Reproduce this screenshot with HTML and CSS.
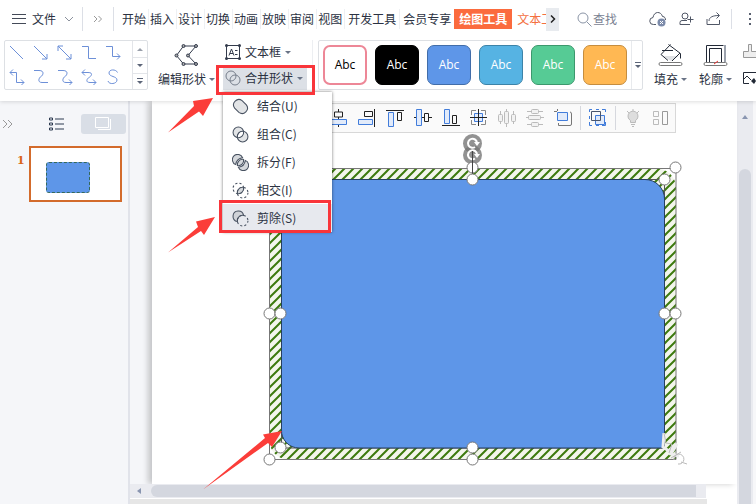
FILE: index.html
```html
<!DOCTYPE html>
<html lang="zh-CN">
<head>
<meta charset="utf-8">
<title>演示编辑器</title>
<link rel="stylesheet" href="styles.css">
</head>
<body>
<header class="header">
  <nav class="menubar">
    <button class="file-btn">
      <svg width="14" height="12" viewBox="0 0 14 12"><path d="M0 1.500h14M0 5.500h14M0 10.500h14" stroke="#444a58"/></svg>
      <span>文件</span>
      <svg width="10" height="6" viewBox="0 0 10 6"><path d="M1 1l4 4 4-4" stroke="#8b919d"/></svg>
    </button>
    <button class="more-btn" aria-label="更多"><svg width="10" height="8" viewBox="0 0 10 8"><path d="M1 1l3 3-3 3M5.500 1l3 3-3 3" stroke="#999"/></svg></button>
    <div class="tabs">
      <a href="#">开始</a><a href="#">插入</a><a href="#">设计</a><a href="#">切换</a><a href="#">动画</a><a href="#">放映</a><a href="#">审阅</a><a href="#">视图</a><a href="#" class="wide">开发工具</a><a href="#" class="wide">会员专享</a><a href="#" class="active">绘图工具</a><a href="#" class="clipped">文本工具</a>
    </div>
    <button class="tab-next" aria-label="下一组"><svg width="6" height="8" viewBox="0 0 6 8"><path d="M1 0.500L4.500 4 1 7.500" stroke="#222" stroke-width="1.500"/></svg></button>
    <button class="search"><svg width="15" height="15" viewBox="0 0 15 15"><circle cx="6" cy="6" r="5" stroke="#8a94a6"/><path d="M10 10l4.500 4.500" stroke="#8a94a6"/></svg>查找</button>
    <div class="tools">
      <button aria-label="云同步"><svg width="18" height="16" viewBox="0 0 18 16"><path d="M7 13.500H4.500A3.500 3.500 0 0 1 4 6.500C5 0 12 0 13.500 5.500c2.500 0 3 2 3 3.500" stroke="#505766"/><circle cx="12.500" cy="11.500" r="4" fill="#7c8baa"/><path d="M11 10l3 3m0-3l-3 3" stroke="#fff"/></svg></button>
      <button aria-label="协作"><svg width="15" height="14" viewBox="0 0 15 14"><circle cx="6" cy="4" r="3" stroke="#505766"/><path d="M11 12.500H1v-2Q1 8.500 3 8.500h5M11.500 4.500v6M8.500 7.500h6" stroke="#505766"/></svg></button>
      <button aria-label="分享"><svg width="15" height="14" viewBox="0 0 15 14"><path d="M1 7v5.500h12.500V8M3 9c0-4 4-5.500 10-5.500M10.500.5l3 3-3 3" stroke="#505766"/></svg></button>
    </div>
    <button class="dots" aria-label="选项"><i></i><i></i><i></i></button>
  </nav>

  <div class="ribbon">
    <div class="shapes">
      <div class="shape-grid">
        <button aria-label="直线"><svg viewBox="0 0 16 16"><path d="M1 1l13 13"/></svg></button>
        <button aria-label="箭头"><svg viewBox="0 0 16 16"><path d="M1 1l13 13M14 9v5H9"/></svg></button>
        <button aria-label="双向箭头"><svg viewBox="0 0 16 16"><path d="M1 1l13 13M14 9v5H9M1 6V1h5"/></svg></button>
        <button aria-label="肘形"><svg viewBox="0 0 16 16"><path d="M1 1.500h6.500v12H15"/></svg></button>
        <button aria-label="肘形箭头"><svg viewBox="0 0 16 16"><path d="M1 1.500h6.500v10H15M12 8.500l3 3-3 3"/></svg></button>
        <button aria-label="双向肘形"><svg viewBox="0 0 16 16"><path d="M1 3.500h6.500v10H15M12 10.500l3 3-3 3M4 .5l-3 3 3 3"/></svg></button>
        <button aria-label="曲线"><svg viewBox="0 0 16 16"><path d="M1 1.500h5c6 0 4 5 2 6s-4 6 1 6h6"/></svg></button>
        <button aria-label="曲线箭头"><svg viewBox="0 0 16 16"><path d="M1 1.500h5c6 0 4 5 2 6s-4 6 1 6h6M12 10.500l3 3-3 3"/></svg></button>
        <button aria-label="双向曲线"><svg viewBox="0 0 16 16"><path d="M1 3.500h6c6 0 3 4 1 5s-4 5 1 5h6M12 10.500l3 3-3 3M4 .5l-3 3 3 3"/></svg></button>
        <button aria-label="自由曲线"><svg viewBox="0 0 16 16"><path d="M12.500 3.500C11 0 4 0 4 4s8 3 8 7-8 5-9 1"/></svg></button>
      </div>
      <div class="stepper">
        <button aria-label="上"><svg width="6" height="3" viewBox="0 0 6 3"><path d="M0 3l3-3 3 3z" fill="#999faa"/></svg></button>
        <button aria-label="下"><svg width="6" height="3" viewBox="0 0 6 3"><path d="M0 0l3 3 3-3z" fill="#5c6578"/></svg></button>
        <button aria-label="展开"><svg width="6" height="7" viewBox="0 0 6 7"><path d="M0 .5h6" stroke="#5c6578"/><path d="M0 3l3 3 3-3z" fill="#5c6578"/></svg></button>
      </div>
    </div>

    <button class="big edit-shape">
      <svg width="25" height="24" viewBox="0 0 25 24"><path d="M9.500 3H22l-8 9.500L22 21H9.500L2.500 12.500z" stroke="#333b4c"/><g fill="#aaa" stroke="#333b4c"><circle cx="9.500" cy="3" r="1.500"/><circle cx="22" cy="3" r="1.500"/><circle cx="14" cy="12.500" r="1.500"/><circle cx="22" cy="21" r="1.500"/><circle cx="9.500" cy="21" r="1.500"/><circle cx="2.500" cy="12.500" r="1.500"/></g></svg>
      <span class="label">编辑形状<i class="caret"></i></span>
    </button>

    <div class="stack">
      <button class="small"><svg width="16" height="16" viewBox="0 0 16 16"><path d="M1.500 1.500h13v13h-13z" stroke="#333b4c"/><g fill="#333b4c"><circle cx="1.500" cy="1.500" r="1.500"/><circle cx="14.500" cy="1.500" r="1.500"/><circle cx="1.500" cy="14.500" r="1.500"/><circle cx="14.500" cy="14.500" r="1.500"/></g><path d="M4 11.500L6.500 5 9 11.500M5 9.500h3M10 6.500h2.500M10 10.500h2.500" stroke="#333b4c"/></svg><span>文本框</span><i class="caret"></i></button>
      <div class="merge">
        <button class="small open"><svg width="16" height="16" viewBox="0 0 16 16"><circle cx="6" cy="6" r="5" stroke="#777f8c"/><circle cx="10" cy="10" r="5" stroke="#777f8c"/></svg><span>合并形状</span><i class="caret"></i></button>
        <div class="dropdown" role="menu">
          <button role="menuitem"><svg viewBox="0 0 16 16"><path d="M2.500 9.500a5 5 0 0 1 7-7l4 4a5 5 0 0 1-7 7z" fill="#e2e4e6"/></svg>结合(U)</button>
          <button role="menuitem"><svg viewBox="0 0 16 16"><circle cx="6" cy="6" r="5" fill="#e2e4e6"/><circle cx="10" cy="10" r="5" fill="#e2e4e6"/><path d="M5.100 10.900A5 5 0 0 1 10.900 5.100 5 5 0 0 1 5.100 10.900z" fill="#fff"/></svg>组合(C)</button>
          <button role="menuitem"><svg viewBox="0 0 16 16"><path d="M3.500 10A5 5 0 1 1 10 3.500C6 4 4 6 3.500 10zM12.500 6A5 5 0 1 1 6 12.500C10 12 12 10 12.500 6z" fill="#d5d8dc"/><path d="M5.100 10.900A5 5 0 0 1 10.900 5.100 5 5 0 0 1 5.100 10.900z" fill="#d5d8dc"/></svg>拆分(F)</button>
          <button role="menuitem"><svg viewBox="0 0 16 16"><g stroke-dasharray="2 2"><circle cx="6" cy="6" r="5"/><circle cx="10" cy="10" r="5"/></g><path d="M5.100 10.900A5 5 0 0 1 10.900 5.100 5 5 0 0 1 5.100 10.900z" fill="#d5d8dc"/></svg>相交(I)</button>
          <button role="menuitem" class="selected"><svg viewBox="0 0 16 16"><path d="M5.100 10.900A5 5 0 1 1 10.900 5.100 5 5 0 0 0 5.100 10.900z" fill="#d0d3d8"/><circle cx="10" cy="10" r="5" stroke-dasharray="2 2"/></svg>剪除(S)</button>
        </div>
      </div>
    </div>

    <div class="styles">
      <button class="swatch white">Abc</button>
      <button class="swatch black">Abc</button>
      <button class="swatch blue">Abc</button>
      <button class="swatch sky">Abc</button>
      <button class="swatch green">Abc</button>
      <button class="swatch orange">Abc</button>
      <button class="expand" aria-label="更多样式"><svg width="6" height="7" viewBox="0 0 6 7"><path d="M0 .5h6" stroke="#5c6578"/><path d="M0 3l3 3 3-3z" fill="#5c6578"/></svg></button>
    </div>

    <button class="big fill">
      <svg width="25" height="24" viewBox="0 0 25 24"><path d="M5 13h16l-8 5z" fill="#dfe1e4"/><path d="M12.500 1.500L3 11.500l7 6M10.500 1.500l12 9v5M22 10l-8 8M4 7.500h11" stroke="#222936"/><rect x="1" y="19.500" width="23" height="3" rx="1.500" fill="#fff" stroke="#777"/></svg>
      <span class="label">填充<i class="caret"></i></span>
    </button>
    <button class="big outline">
      <svg width="25" height="24" viewBox="0 0 25 24"><path d="M3.500 19V2.500h17" stroke="#222936"/><path d="M6.500 19V5.500h12V19" stroke="#222936"/><path d="M22 2v17" stroke="#9ca2ad" stroke-width="2"/><rect x="1" y="19.500" width="23" height="3" rx="1.500" fill="#fff" stroke="#777"/><path d="M11 21l4-3" stroke="#e33"/></svg>
      <span class="label">轮廓<i class="caret"></i></span>
    </button>
    <div class="edge">
      <button aria-label="格式刷"><svg width="16" height="16" viewBox="0 0 16 16"><path d="M1.500 14.500v-6h5v-7h3v7h5v6z" fill="#eee" stroke="#999"/></svg></button>
      <button aria-label="图片效果"><svg width="16" height="14" viewBox="0 0 16 14"><path d="M7 12.500H1.500v-11h14v5M2 8l3-3 4 4" stroke="#222936"/><path d="M9 10l3-3 2 3-2 3z" fill="#222936"/></svg></button>
    </div>
  </div>
</header>

<main class="main">
  <aside class="side">
    <div class="side-head">
      <button aria-label="展开"><svg width="11" height="10" viewBox="0 0 11 10"><path d="M1 1l4 4-4 4M6 1l4 4-4 4" stroke="#999"/></svg></button>
      <button class="list" aria-label="大纲"><svg width="15" height="14" viewBox="0 0 15 14"><path d="M.5 1h3v2h-3zM.5 6h3v2h-3zM.5 11h3v2h-3zM6 2h9M6 7h9M6 12h9" stroke="#2d3a50"/></svg></button>
      <button class="thumbs" aria-label="幻灯片"><svg width="17" height="14" viewBox="0 0 17 14"><path d="M.5.5h13v10H.5zM3 12.500h12.500V2" stroke="#fff"/></svg></button>
    </div>
    <div class="slide-row">
      <b>1</b>
      <div class="slide"><div class="mini"></div></div>
    </div>
  </aside>

  <section class="work">
    <div class="view">
      <div class="canvas">
        <div class="page">
          <svg class="drawing" width="440" height="340" viewBox="260 130 440 340">
            <defs><pattern id="hatch" width="9" height="9" patternUnits="userSpaceOnUse"><path d="M0 0h9v9H0z" fill="#f3f6ec"/><path d="M-3 3l6-6M-1 10l11-11M6 12l6-6" stroke="#3c7a0d" stroke-width="2"/></pattern></defs>
            <path d="M269.500 168.500H657A19 19 0 0 1 676 187V459.500H288A19 19 0 0 1 269.500 441z" fill="url(#hatch)"/>
            <path d="M269.500 168.500h406.500v291h-406.500z" stroke="#777"/>
            <path d="M281.500 179.500h383v268.500h-383z" stroke="#555"/>
            <path d="M281.500 179.500H645A19.500 19.500 0 0 1 664.500 199V448H299A17.500 17.500 0 0 1 281.500 430z" fill="#5e96e8" stroke="#263f60"/>
            <g class="rotate"><circle cx="472.500" cy="143.500" r="9.500"/><circle cx="472.500" cy="155" r="9.500"/><path d="M475 147a4.500 4.500 0 1 1 2-4M475 158.500a4.500 4.500 0 1 1 2-4"/><path class="tip" d="M474 142h6l-3 4zM474 154h6l-3 4z"/></g>
            <g fill="#fff" stroke="#777"><circle cx="472.500" cy="167.500" r="5.500"/><path d="M472.500 151v23" stroke="#444"/><circle cx="472.500" cy="179.500" r="5.500"/><circle cx="675.500" cy="167.500" r="5.500"/><circle cx="664.500" cy="179.500" r="5.500"/><circle cx="269.500" cy="313.500" r="5.500"/><circle cx="280.500" cy="313.500" r="5.500"/><circle cx="664.500" cy="313.500" r="5.500"/><circle cx="675.500" cy="313.500" r="5.500"/><circle cx="472.500" cy="447.500" r="5.500"/><circle cx="472.500" cy="459.500" r="5.500"/><circle cx="269.500" cy="459.500" r="5.500"/><circle cx="280.500" cy="447.500" r="5.500"/></g>
            <path d="M664 433l-1 14 6 4 8-7-6 10 8 2" stroke="#eee" stroke-width="3"/>
            <path d="M664 433l2 10 6 1-3 9M671 458l10-6M674 460a5 5 0 1 1 4 4M681 462l6 2" stroke="#bbb"/>
          </svg>
          <div class="align-bar">
            <button aria-label="左对齐"><svg viewBox="0 0 18 18"><path d="M1.500 0v18"/></svg></button>
            <button aria-label="水平居中"><svg viewBox="0 0 18 18"><path d="M8.500 0v3M8.500 8v2M8.500 15v3M4.500 3h8v5h-8z"/><path class="b" d="M.5 10.500h16v5H.5z"/></svg></button>
            <button aria-label="右对齐"><svg viewBox="0 0 18 18"><path d="M16.500 0v18M6.500 2.500h8v5h-8z"/><path class="b" d="M.5 10.500h14v5H.5z"/></svg></button>
            <button aria-label="顶端对齐"><svg viewBox="0 0 18 18"><path d="M0 1.500h18M11.500 3.500h4v8h-4z"/><path class="b" d="M2.500 3.500h5v14h-5z"/></svg></button>
            <button aria-label="垂直居中"><svg viewBox="0 0 18 18"><path d="M0 8.500h2M8 8.500h2M15 8.500h3M10.500 4.500h4v8h-4z"/><path class="b" d="M2.500 .5h5v16h-5z"/></svg></button>
            <button aria-label="底端对齐"><svg viewBox="0 0 18 18"><path d="M0 16.500h18M10.500 6.500h4v8h-4z"/><path class="b" d="M2.500 .5h5v14h-5z"/></svg></button>
            <button aria-label="居中"><svg viewBox="0 0 18 18"><path d="M1.500 6V1.500H6M11 1.500h4.500V6M15.500 11v4.500H11M6 15.500H1.500V11" stroke="#888"/><path class="b" d="M4.500 4.500h8v8h-8z"/><path d="M8.500 0v17M0 8.500h17"/></svg></button>
            <button aria-label="横向分布"><svg class="g" viewBox="0 0 18 18"><path d="M2.500 2v13M8.500 0v18M15.500 2v13"/><g fill="#f2f2f2"><rect x=".5" y="5.500" width="4" height="7" rx="1"/><rect x="6.500" y="2.500" width="4" height="12" rx="1"/><rect x="13.500" y="5.500" width="4" height="7" rx="1"/></g></svg></button>
            <button aria-label="纵向分布"><svg class="g" viewBox="0 0 18 18"><path d="M1 2.500h16M0 8.500h18M1 15.500h16"/><g fill="#f2f2f2"><rect x="5.500" y=".5" width="7" height="4" rx="1"/><rect x="2.500" y="6.500" width="12" height="4" rx="1"/><rect x="5.500" y="13.500" width="7" height="4" rx="1"/></g></svg></button>
            <button aria-label="相对对齐"><svg viewBox="0 0 18 18"><path d="M0 2.500h3M3.500 0v2M16 3q1.500 0 1.500 2v10q0 1.500-1.500 1.500H4.500V14" stroke="#777"/><path class="b" d="M3.500 3.500h10v8h-10z"/></svg></button>
            <i></i>
            <button aria-label="组合"><svg viewBox="0 0 18 18"><path class="b" d="M6.500 6.500h9v9h-9z"/><path d="M2.500 2.500h9v9h-9z" stroke="#4a566c"/><path d="M.5 3V.5H3M13 .5h3.500V3M16.500 13v3.500H13M3 16.500H.5V13M7 .5h3M.5 7v3M7 16.500h3" stroke="#427ddb"/></svg></button>
            <i></i>
            <button aria-label="提示"><svg class="g" viewBox="0 0 18 18"><path d="M9 0v2M3 2l2 2M15 2l-2 2"/><path d="M6.500 13.500v-2a5 5 0 1 1 5 0v2zM7 15.500h4M8 17.500h2" fill="#ddd"/></svg></button>
            <button aria-label="版式"><svg class="g" viewBox="0 0 18 18"><path d="M1.500 2.500h5v5h-5zM1.500 10.500h5v5h-5z"/><path d="M10.500 2.500h5v13h-5z" stroke="#999"/></svg></button>
          </div>
        </div>
      </div>
      <div class="hscroll"><svg width="4" height="6" viewBox="0 0 4 6"><path d="M4 0L0 3l4 3z" fill="#8995b0"/></svg><div></div></div>
      <div class="status"></div>
    </div>
    <div class="vscroll"><svg width="6" height="4" viewBox="0 0 6 4"><path d="M0 4l3-4 3 4z" fill="#8995b0"/></svg><div></div></div>
  </section>
</main>

<svg class="arrows" width="300" height="410" viewBox="160 90 300 410"><g fill="#fb3d39"><path d="M168 132.500L194 106 193 101 213 98 203 116 199 111.500z"/><path d="M168 252.500L198 227 196 221.500 215 217 204 235 201 231z"/><path d="M203 489.500L265 438 263 434.500 282 431 272 447 268 443z"/></g></svg>
</body>
</html>
```
FILE: styles.css
```css
* { box-sizing: border-box; }
body { margin: 0; min-height: 100vh; display: flex; flex-direction: column; overflow: hidden; position: relative; font: 12px/16px "Noto Sans CJK SC", sans-serif; color: #2b3242; background: #f5f6f9; }
button { font: inherit; color: inherit; background: none; border: 0; padding: 0; display: flex; align-items: center; justify-content: center; flex: none; white-space: nowrap; }
a { color: inherit; text-decoration: none; }
svg { display: block; fill: none; flex: none; }

.header { background: #fff; position: relative; z-index: 2; box-shadow: 0 1px 4px #0002; }
.menubar { display: flex; align-items: center; height: 38px; padding-left: 12px; overflow: hidden; }
.file-btn { gap: 6px; padding-right: 8px; height: 24px; }
.file-btn svg:last-child { margin-left: 2px; }
.more-btn { width: 32px; height: 24px; border: solid #dcdfe6; border-width: 0 1px; }
.tabs { display: flex; align-items: center; width: 432px; overflow: hidden; padding-left: 6px; }
.tabs a { padding: 2px; flex: none; }
.tabs a + a { border-left: 1px solid #eef0f3; padding-left: 1px; }
.tabs a.wide { padding: 2px 3px; }
.tabs a.active { background: #fb6b3e; color: #fff; font-weight: bold; border: 0; padding: 2px 5px; }
.tabs a.clipped { color: #f4703f; border: 0; padding-left: 5px; }
.tab-next { width: 13px; height: 23px; background: #e8ebef; }
.search { color: #7a8292; gap: 1px; margin-left: 18px; }
.tools { display: flex; gap: 12px; align-items: center; margin-left: 32px; }
.dots { flex-direction: column; gap: 3px; margin-left: 10px; height: 20px; border-left: 1px solid #dcdfe6; padding-left: 17px; }
.dots i { width: 2px; height: 2px; background: #596170; }

.ribbon { display: flex; align-items: flex-start; height: 63px; padding: 2px 0 0 4px; }
.shapes { display: flex; width: 144px; height: 50px; border: 1px solid #dde0e4; border-radius: 2px; flex: none; }
.shape-grid { display: grid; grid-template-columns: repeat(5, 24px); grid-template-rows: 24px 24px; flex: 1; }
.shape-grid svg { width: 16px; height: 16px; stroke: #6d90d8; }
.stepper { width: 15px; border-left: 1px solid #e3e5e9; display: grid; grid-template-rows: repeat(3, 1fr); }
.stepper button + button { border-top: 1px solid #e3e5e9; }
.caret { border: 3px solid transparent; border-top-color: #697386; border-bottom: 0; }
.big { flex-direction: column; gap: 4px; padding-top: 3px; }
.label { display: flex; align-items: center; gap: 3px; }
.edit-shape { margin-left: 10px; }
.stack { display: flex; flex-direction: column; margin-left: 8px; padding-right: 5px; border-right: 1px solid #edeff2; gap: 2px; height: 50px; flex: none; }
.small { height: 24px; gap: 4px; padding: 0 4px 0 2px; justify-content: flex-start; }
.small.open { background: #dce0e6; }
.merge { position: relative; }
.merge::after { content: ""; position: absolute; inset: -1px -8px -5px -7px; border: 3px solid #f9353a; z-index: 4; }
.dropdown { position: absolute; left: 0; top: 26px; width: 109px; background: #fff; box-shadow: 0 0 3px #0008; z-index: 3; }
.dropdown button { position: relative; width: 100%; height: 28px; justify-content: flex-start; gap: 8px; padding-left: 9px; }
.dropdown svg { width: 17px; height: 17px; stroke: #485261; }
.dropdown .selected { background: #e7e9ee; }
.selected::after { content: ""; position: absolute; inset: -4px 1px -1px -4px; border: 3px solid #f9353a; }
.styles { display: flex; align-items: center; gap: 8px; width: 325px; height: 50px; margin-left: 5px; padding-left: 4px; border: 1px solid #dde0e4; border-radius: 2px; flex: none; }
.swatch { width: 44px; height: 40px; border: 1px solid; border-radius: 7px; color: #fff; font-family: "Open Sans", sans-serif; }
.white { color: #000; border-color: #ed8797; border-width: 2px; }
.black { background: #000; border-color: #000; }
.blue { background: #5e96e8; border-color: #416da9; }
.sky { background: #56b3e3; border-color: #3c83a8; }
.green { background: #56cb95; border-color: #3c986d; }
.orange { background: #ffb853; border-color: #c58d3f; }
.expand { width: 12px; height: 48px; margin-left: -4px; border-left: 1px solid #e8eaed; }
.fill { margin-left: 11px; }
.outline { margin-left: 12px; }
.edge { display: flex; flex-direction: column; gap: 12px; margin-left: 10px; padding-top: 3px; }

.main { flex: 1; display: flex; }
.side { width: 130px; border-right: 2px solid #e1e3ea; flex: none; }
.side-head { display: flex; align-items: center; padding: 13px 2px 0; }
.side-head .list { margin-left: 36px; }
.thumbs { width: 45px; height: 20px; background: #d9dee6; border-radius: 3px; margin-left: 17px; }
.slide-row { display: flex; gap: 7px; padding: 12px 0 0 17px; }
.slide-row b { color: #d96417; font: bold 11px/30px "DejaVu Serif", serif; width: 5px; }
.slide { width: 93px; height: 56px; border: 2px solid #d36b2c; background: #fff; padding: 14px 15px; }
.mini { width: 44px; height: 31px; background: #5e96e8; border: 1px dashed #34695a; border-radius: 3px; }
.work { flex: 1; min-width: 0; display: flex; }
.view { flex: 1; min-width: 0; display: flex; flex-direction: column; background: #fff; }
.canvas { flex: 1; display: flex; padding-left: 22px; background: #f5f6f9; }
.page { flex: 1; background: #fff; box-shadow: -4px 0 6px #0003; position: relative; }
.drawing { position: absolute; left: 108px; top: 29px; }
.rotate circle { fill: #777c; }
.rotate path { stroke: #fff; stroke-width: 2; }
.rotate .tip { fill: #fff; stroke: none; }
.align-bar { position: absolute; left: 144px; top: 2px; display: flex; align-items: center; height: 30px; border: 1px solid #d8d8d8; background: #fafafa; }
.align-bar button { width: 28px; height: 28px; }
.align-bar i { width: 1px; height: 24px; margin: 0 3px; background: #d6d8de; }
.align-bar svg { width: 18px; height: 18px; stroke: #222; }
.align-bar .b { stroke: #427ddb; fill: #e2ebfa; }
.align-bar svg.g { stroke: #bbb; }
.vscroll { width: 19px; background: #eaebf0; border-right: 3px solid #f7f7f9; padding-top: 14px; display: flex; flex-direction: column; align-items: center; flex: none; }
.vscroll div { width: 12px; flex: 1; margin-top: 50px; background: #d4d7df; border-radius: 6px 6px 0 0; }
.hscroll { height: 14px; margin-right: 31px; background: #eaebf0; display: flex; align-items: center; padding: 0 10px 0 7px; gap: 10px; position: relative; }
.hscroll div { flex: 1; height: 12px; background: #d4d7df; border-radius: 6px 0 0 6px; }
.status { height: 6px; margin-right: 30px; background: #e6e6e6; border-top: 1px solid #fff; }
.arrows { position: absolute; left: 160px; top: 90px; z-index: 5; pointer-events: none; }
```
